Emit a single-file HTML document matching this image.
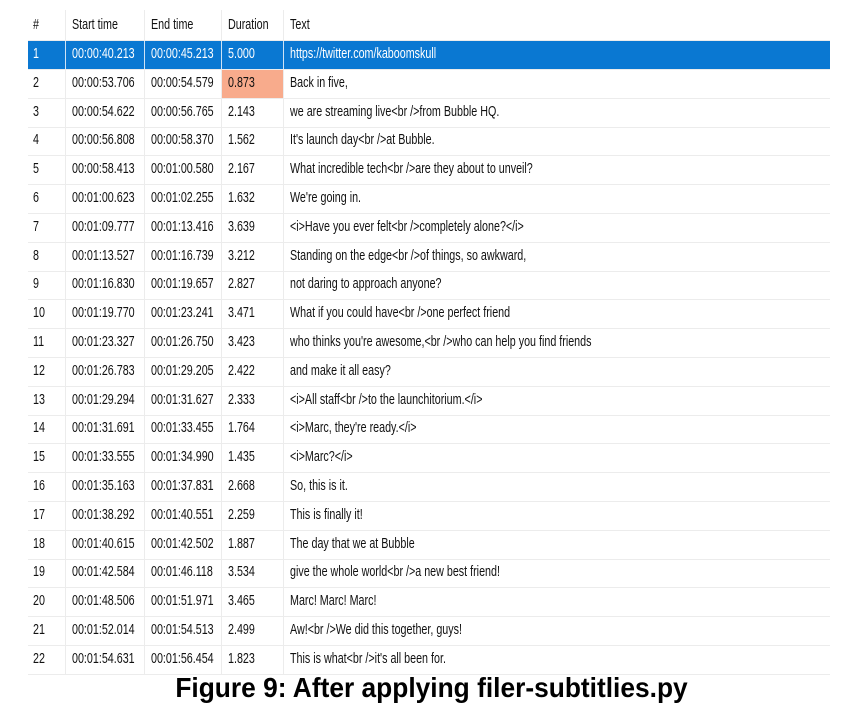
<!DOCTYPE html>
<html><head><meta charset="utf-8"><style>
body{margin:0;width:863px;height:709px;background:#fff;position:relative;overflow:hidden;font-family:"Liberation Sans",sans-serif;}
.row{position:absolute;left:28px;width:802px;height:29px;border-bottom:1px solid #ececec;box-sizing:border-box;}
.c{position:absolute;top:0;height:100%;border-right:1px solid #ececec;box-sizing:border-box;}
.t{position:absolute;top:5px;font-size:14.5px;color:#111;transform:scaleX(0.74);transform-origin:0 0;white-space:nowrap;}
.sel{background:#0a78d2;}
.sel .t{color:#fff;}
.sel .c{border-right-color:#cfe3f5;}
.cap{position:absolute;left:0;width:863px;top:672px;text-align:center;font-weight:bold;font-size:28px;color:#000;transform:scaleX(0.94);}
</style></head><body>
<div id="tbl"></div>
<div class="cap">Figure 9: After applying filer-subtitlies.py</div>
<script>
(function(){
var rows=[["#","Start time","End time","Duration","Text"],
["1","00:00:40.213","00:00:45.213","5.000","https://twitter.com/kaboomskull"],
["2","00:00:53.706","00:00:54.579","0.873","Back in five,"],
["3","00:00:54.622","00:00:56.765","2.143","we are streaming live<br />from Bubble HQ."],
["4","00:00:56.808","00:00:58.370","1.562","It's launch day<br />at Bubble."],
["5","00:00:58.413","00:01:00.580","2.167","What incredible tech<br />are they about to unveil?"],
["6","00:01:00.623","00:01:02.255","1.632","We're going in."],
["7","00:01:09.777","00:01:13.416","3.639","<i>Have you ever felt<br />completely alone?</i>"],
["8","00:01:13.527","00:01:16.739","3.212","Standing on the edge<br />of things, so awkward,"],
["9","00:01:16.830","00:01:19.657","2.827","not daring to approach anyone?"],
["10","00:01:19.770","00:01:23.241","3.471","What if you could have<br />one perfect friend"],
["11","00:01:23.327","00:01:26.750","3.423","who thinks you're awesome,<br />who can help you find friends"],
["12","00:01:26.783","00:01:29.205","2.422","and make it all easy?"],
["13","00:01:29.294","00:01:31.627","2.333","<i>All staff<br />to the launchitorium.</i>"],
["14","00:01:31.691","00:01:33.455","1.764","<i>Marc, they're ready.</i>"],
["15","00:01:33.555","00:01:34.990","1.435","<i>Marc?</i>"],
["16","00:01:35.163","00:01:37.831","2.668","So, this is it."],
["17","00:01:38.292","00:01:40.551","2.259","This is finally it!"],
["18","00:01:40.615","00:01:42.502","1.887","The day that we at Bubble"],
["19","00:01:42.584","00:01:46.118","3.534","give the whole world<br />a new best friend!"],
["20","00:01:48.506","00:01:51.971","3.465","Marc! Marc! Marc!"],
["21","00:01:52.014","00:01:54.513","2.499","Aw!<br />We did this together, guys!"],
["22","00:01:54.631","00:01:56.454","1.823","This is what<br />it's all been for."]];
var cols=[[0,38],[38,79],[117,77],[194,62],[256,546]];
var h="";
function esc(s){return s.replace(/&/g,"&amp;").replace(/</g,"&lt;").replace(/>/g,"&gt;");}
for(var i=0;i<rows.length;i++){
 var ty=i==0?10:41+(i-1)*28.8;
 var ht=i==0?31:29;
 h+='<div class="row'+(i==1?' sel':'')+'" style="top:'+ty+'px;height:'+ht+'px">';
 for(var j=0;j<5;j++){
  var bg=(i==2&&j==3)?'background:#f8ab8c;':'';
  var br=j==4?'border-right:none;':'';
  h+='<div class="c" style="left:'+cols[j][0]+'px;width:'+cols[j][1]+'px;'+bg+br+'"><span class="t" style="left:'+(j==0?5:6)+'px;'+(i==0?'top:7px;':'')+'">'+esc(rows[i][j])+'</span></div>';
 }
 h+='</div>';
}
document.getElementById("tbl").innerHTML=h;
})();
</script>
</body></html>
